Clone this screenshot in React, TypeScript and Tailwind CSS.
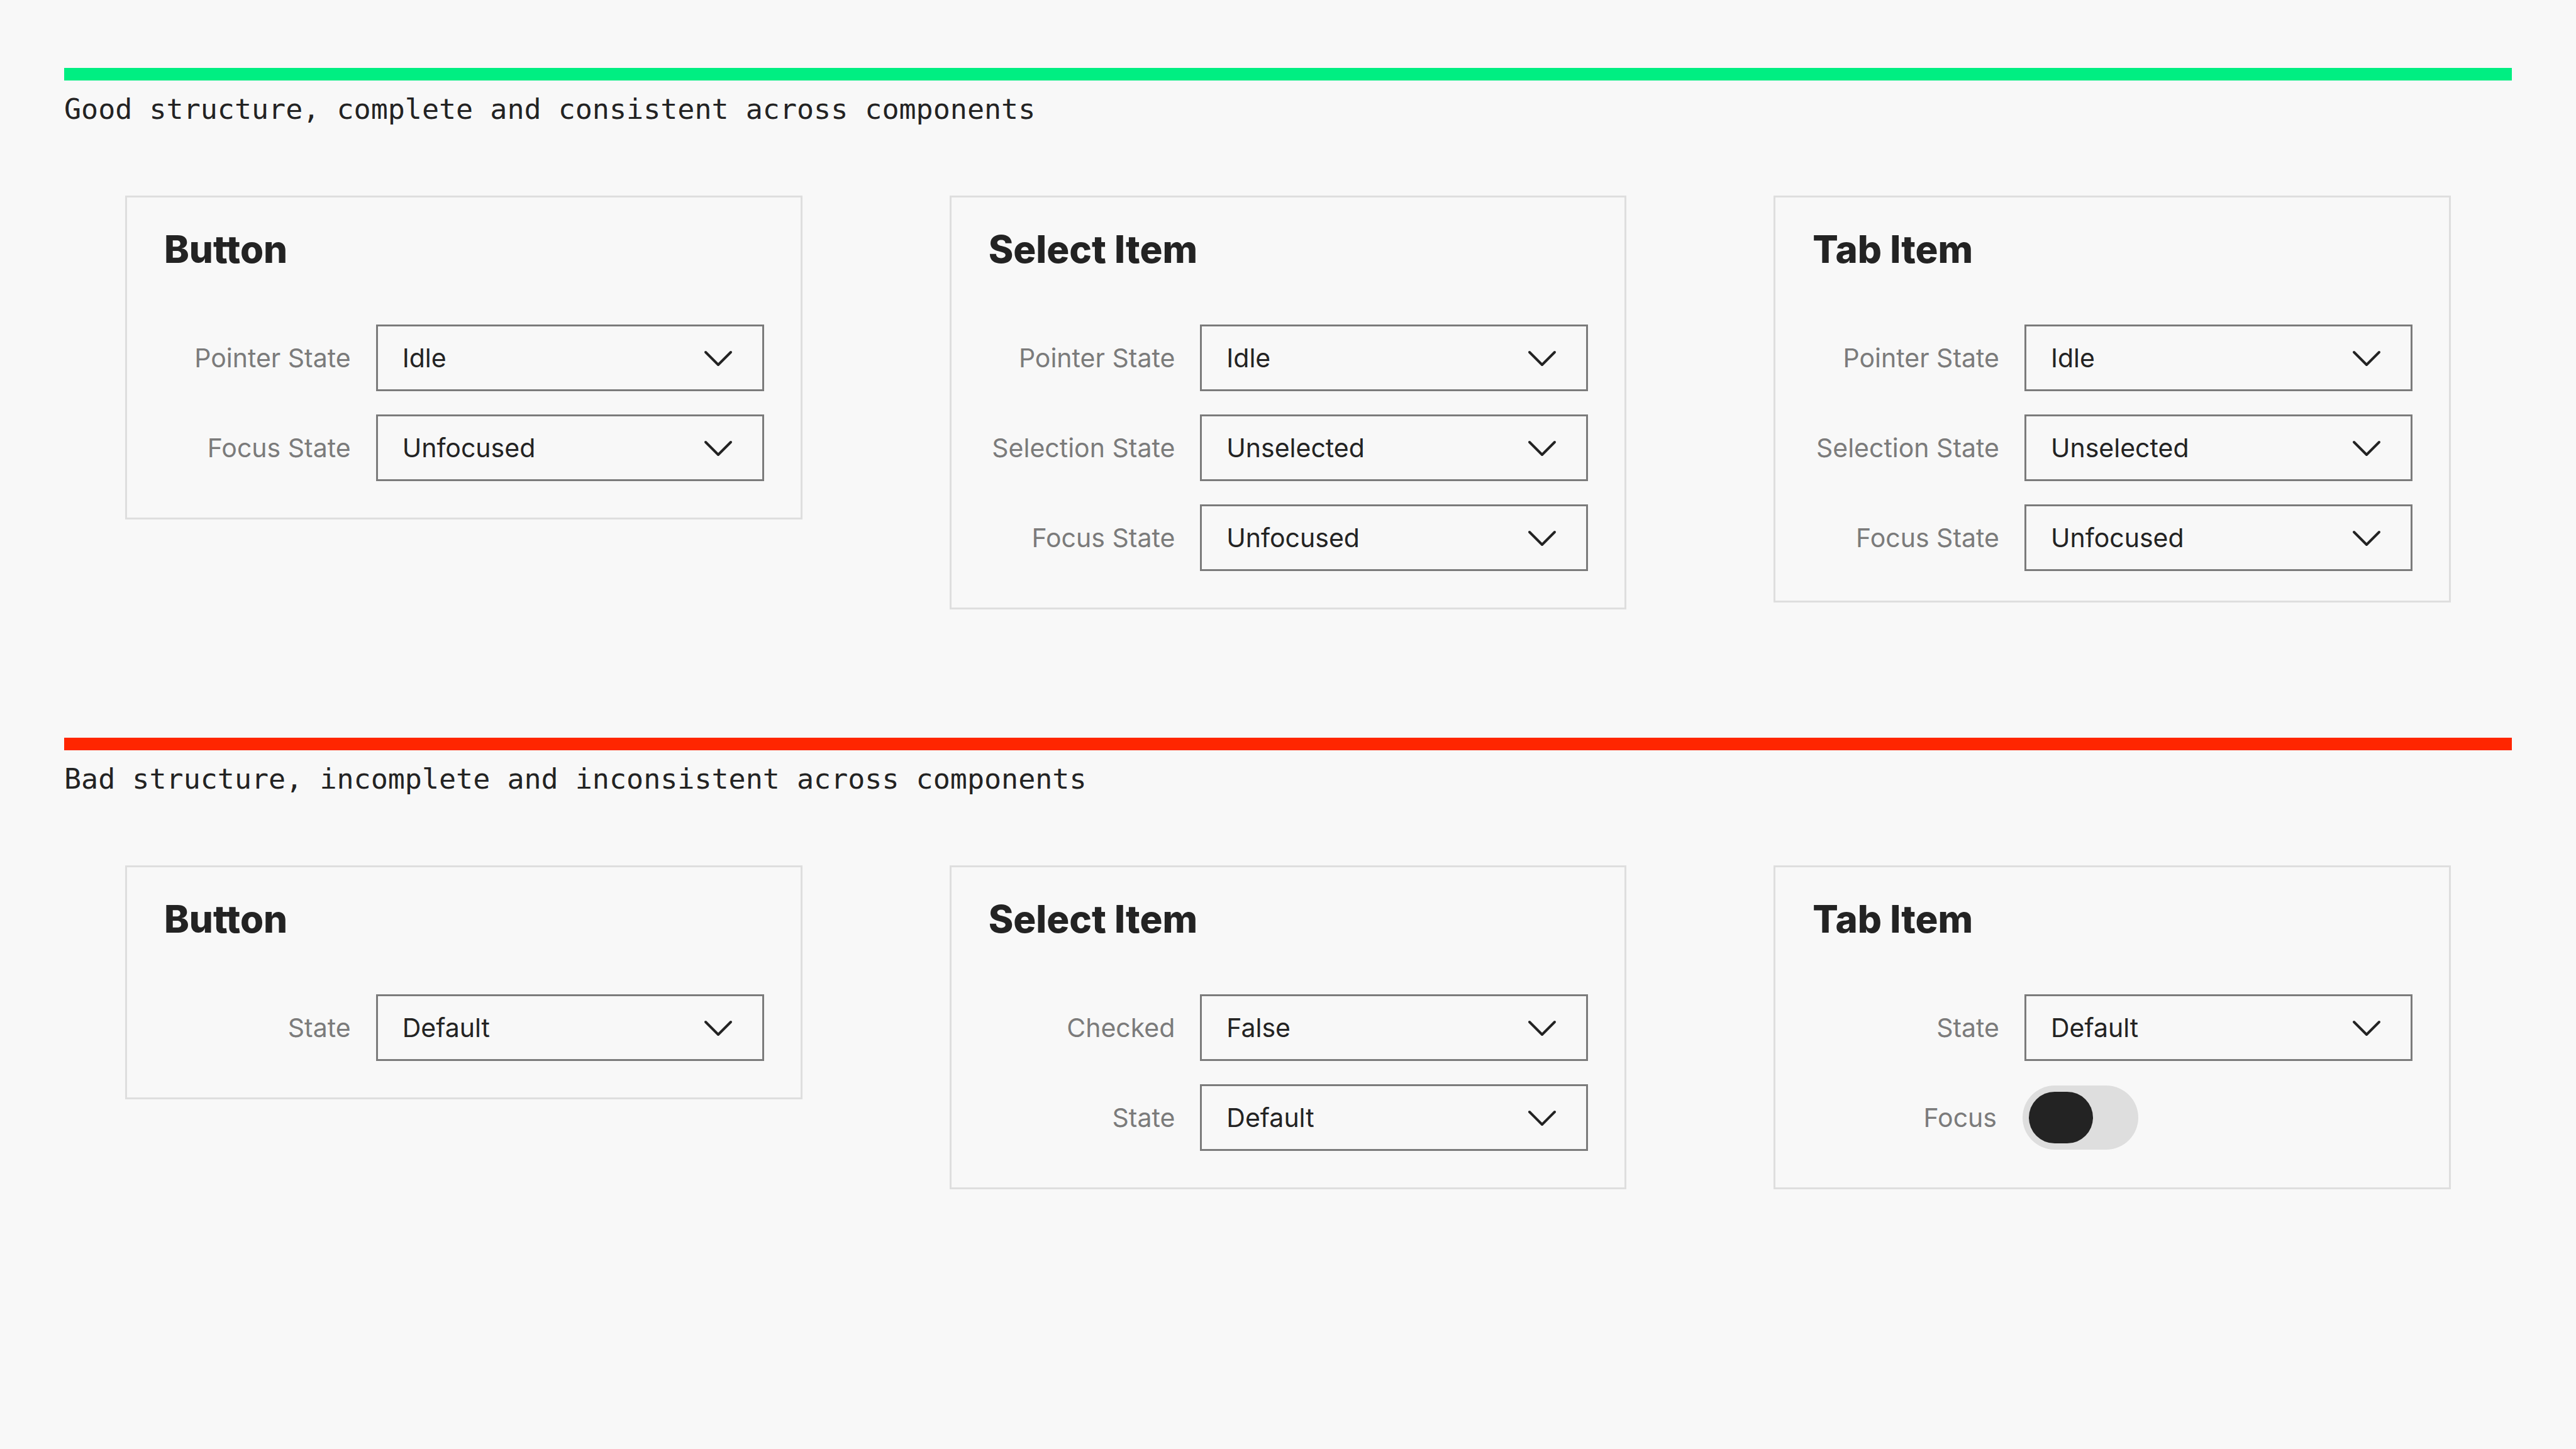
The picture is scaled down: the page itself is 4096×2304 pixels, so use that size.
import { useId } from "react";

type Field =
  | { kind: "select"; label: string; value: string; options: string[] }
  | { kind: "toggle"; label: string };

type Panel = { title: string; fields: Field[]; compact?: boolean };

type Group = { caption: string; bar: string; panels: Panel[] };

const pointer: Field = { kind: "select", label: "Pointer State", value: "Idle", options: ["Idle", "Hover", "Pressed"] };
const selection: Field = { kind: "select", label: "Selection State", value: "Unselected", options: ["Unselected", "Selected"] };
const focus: Field = { kind: "select", label: "Focus State", value: "Unfocused", options: ["Unfocused", "Focused"] };
const state: Field = { kind: "select", label: "State", value: "Default", options: ["Default", "Hover", "Pressed"] };
const checked: Field = { kind: "select", label: "Checked", value: "False", options: ["False", "True"] };

const groups: Group[] = [
  {
    caption: "Good structure, complete and consistent across components",
    bar: "bg-[#00ee82]",
    panels: [
      { title: "Button", fields: [pointer, focus] },
      { title: "Select Item", fields: [pointer, selection, focus] },
      { title: "Tab Item", fields: [pointer, selection, focus], compact: true },
    ],
  },
  {
    caption: "Bad structure, incomplete and inconsistent across components",
    bar: "bg-[#ff2600]",
    panels: [
      { title: "Button", fields: [state] },
      { title: "Select Item", fields: [checked, state] },
      { title: "Tab Item", fields: [state, { kind: "toggle", label: "Focus" }] },
    ],
  },
];

function Chevron() {
  return (
    <svg
      viewBox="0 0 48 48"
      className="pointer-events-none absolute top-1/2 right-[49px] size-12 -translate-y-1/2"
      fill="none"
      stroke="#232323"
      strokeWidth="4"
      strokeLinecap="round"
      strokeLinejoin="round"
      aria-hidden="true"
    >
      <path d="M4 15 L24 35 L44 15" />
    </svg>
  );
}

function FieldRow({ field }: { field: Field }) {
  const id = useId();

  if (field.kind === "toggle") {
    return (
      <div className="flex h-[106px] items-center gap-[41px]">
        <label htmlFor={id} className="flex-1 text-right whitespace-nowrap text-[#7b7b7b]">
          {field.label}
        </label>
        <div className="flex w-[620px]">
          <input
            id={id}
            type="checkbox"
            role="switch"
            className="flex h-[102px] w-[184px] appearance-none items-center rounded-full bg-[#dedede] p-[10px] before:h-[82px] before:w-[102px] before:rounded-full before:bg-[#232323] before:content-[''] checked:justify-end"
          />
        </div>
      </div>
    );
  }

  return (
    <div className="flex h-[106px] items-center gap-[40px]">
      <label htmlFor={id} className="flex-1 text-right whitespace-nowrap text-[#7b7b7b]">
        {field.label}
      </label>
      <div className="relative h-full w-[617px]">
        <select
          id={id}
          defaultValue={field.value}
          className="h-full w-full appearance-none border-3 border-[#7b7b7b] bg-transparent pr-[120px] pl-[39px] text-[#232323]"
        >
          {field.options.map((option) => (
            <option key={option}>{option}</option>
          ))}
        </select>
        <Chevron />
      </div>
    </div>
  );
}

function PanelCard({ panel }: { panel: Panel }) {
  return (
    <article
      className={`border-3 border-[#dedede] pt-[46px] pr-[58px] pl-[59px] ${panel.compact ? "pb-[47px]" : "pb-[58px]"}`}
    >
      <h3 className="text-[60px] leading-[72px] font-extrabold">{panel.title}</h3>
      <div className="mt-[84px] flex flex-col gap-[37px] text-[41px] leading-[50px]">
        {panel.fields.map((field) => (
          <FieldRow key={field.label} field={field} />
        ))}
      </div>
    </article>
  );
}

export default function App() {
  return (
    <main className="flex min-h-screen flex-col gap-[204px] bg-[#f8f8f8] px-[102px] py-[108px] font-['Inter',sans-serif] text-[#232323]">
      {groups.map((group) => (
        <section key={group.caption}>
          <div className={`h-5 ${group.bar}`} />
          <h2 className="mt-4 font-['DejaVu_Sans_Mono',monospace] text-[45px] leading-[60px]">{group.caption}</h2>
          <div className="mt-[107px] grid grid-cols-3 items-start gap-[234px] px-[97px]">
            {group.panels.map((panel) => (
              <PanelCard key={panel.title} panel={panel} />
            ))}
          </div>
        </section>
      ))}
    </main>
  );
}
